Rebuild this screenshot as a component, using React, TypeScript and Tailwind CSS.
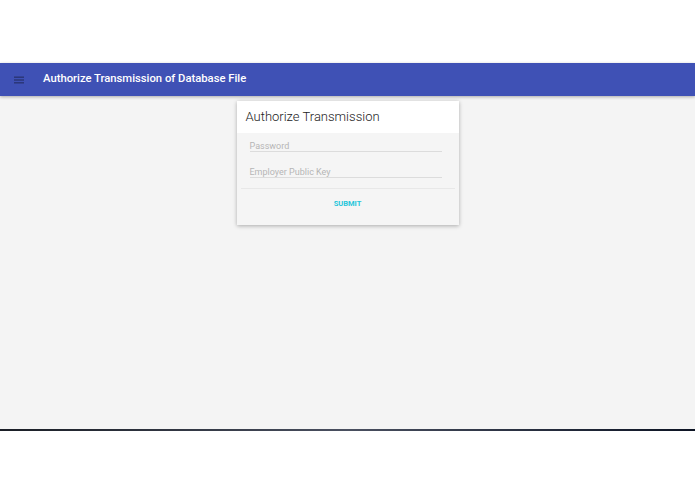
export default function App() {
  return (
    <div className="flex h-[494px] w-[695px] flex-col bg-white font-['Roboto',sans-serif]">
      <div className="h-[63px] shrink-0" />
      <header className="z-10 flex h-[33px] shrink-0 items-center bg-[#3f51b5] shadow-[0_1px_3px_rgba(0,0,0,0.3)]">
        <svg className="ml-[13px] h-[12px] w-[12px]" viewBox="0 0 12 12" fill="#2a3575">
          <rect x="1" y="2.5" width="10" height="1.4" />
          <rect x="1" y="5.3" width="10" height="1.4" />
          <rect x="1" y="8.1" width="10" height="1.4" />
        </svg>
        <h1 className="ml-[18px] text-[11.25px] font-medium text-white">Authorize Transmission of Database File</h1>
      </header>
      <main className="flex h-[333px] shrink-0 justify-center bg-[#f4f4f4] pt-[5px]">
        <div className="h-[124px] w-[222px] bg-[#f5f5f5] shadow-[0_1px_4px_rgba(0,0,0,0.3)]">
          <div className="flex h-[32px] items-center bg-white px-[9px]">
            <h2 className="text-[13px] font-light text-[#222]">Authorize Transmission</h2>
          </div>
          <div className="pl-[13px] pr-[17px] pt-[1px]">
            <div className="h-[18px] border-b border-[#dcdcdc] pt-[6px] text-[9px] leading-[12px] text-[#b5b5b5]">Password</div>
            <div className="mt-[8px] h-[18px] border-b border-[#dcdcdc] pt-[6px] text-[9px] leading-[12px] text-[#b5b5b5]">Employer Public Key</div>
          </div>
          <div className="mx-[4px] mt-[10px] border-t border-[#e8e8e8]" />
          <div className="flex h-[30px] items-center justify-center">
            <span className="text-[7.5px] font-bold text-[#26c6da]">SUBMIT</span>
          </div>
        </div>
      </main>
      <div className="h-[2px] shrink-0 bg-gradient-to-r from-[#1a1e26] via-[#4a5060] to-[#0d1424]" />
    </div>
  );
}
